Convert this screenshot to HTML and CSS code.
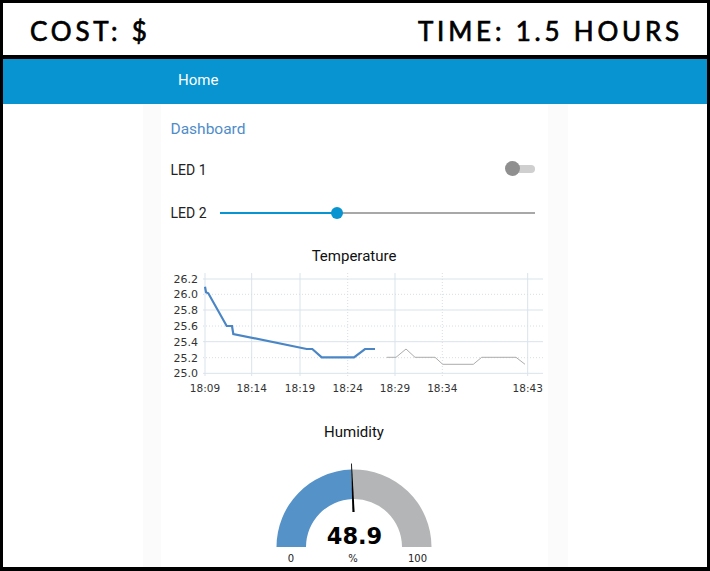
FILE: index.html
```html
<!DOCTYPE html>
<html>
<head>
<meta charset="utf-8">
<link rel="stylesheet" href="styles.css">
</head>
<body>
<div class="frame">
  <header class="banner">
    <span class="banner-text">COST: $</span>
    <span class="banner-text">TIME: 1.5 HOURS</span>
  </header>
  <nav class="toolbar"><span class="toolbar-title">Home</span></nav>
  <main class="content">
    <div class="column">
      <section class="card">
        <div class="group-title">Dashboard</div>
        <div class="row row-led1">
          <span class="row-label">LED 1</span>
          <span class="switch"><span class="switch-thumb"></span></span>
        </div>
        <div class="row row-led2">
          <span class="row-label">LED 2</span>
          <span class="slider">
            <span class="slider-fill"></span>
            <span class="slider-thumb"></span>
          </span>
        </div>
        <div class="widget-title title-temp">Temperature</div>
        <svg class="chart" width="383" height="125" viewBox="-2 0 383 125">
          <g class="grid-solid">
            <line x1="38" y1="9" x2="378" y2="9"/>
            <line x1="38" y1="40" x2="378" y2="40"/>
            <line x1="38" y1="71.7" x2="378" y2="71.7"/>
            <line x1="38" y1="103.3" x2="378" y2="103.3"/>
            <line x1="40" y1="3" x2="40" y2="106"/>
            <line x1="86.7" y1="3" x2="86.7" y2="106"/>
            <line x1="135" y1="3" x2="135" y2="106"/>
            <line x1="230" y1="3" x2="230" y2="106"/>
            <line x1="362.7" y1="3" x2="362.7" y2="106"/>
          </g>
          <g class="grid-dot">
            <line x1="38" y1="24.3" x2="378" y2="24.3"/>
            <line x1="38" y1="56" x2="378" y2="56"/>
            <line x1="38" y1="87.7" x2="378" y2="87.7"/>
            <line x1="182.7" y1="3" x2="182.7" y2="106"/>
            <line x1="277.3" y1="3" x2="277.3" y2="106"/>
          </g>
          <g class="axis-y">
            <text x="33" y="13">26.2</text>
            <text x="33" y="28.3">26.0</text>
            <text x="33" y="44">25.8</text>
            <text x="33" y="60">25.6</text>
            <text x="33" y="75.7">25.4</text>
            <text x="33" y="91.7">25.2</text>
            <text x="33" y="107.3">25.0</text>
          </g>
          <g class="axis-x">
            <text x="40" y="122">18:09</text>
            <text x="86.7" y="122">18:14</text>
            <text x="135" y="122">18:19</text>
            <text x="182.7" y="122">18:24</text>
            <text x="230" y="122">18:29</text>
            <text x="277.3" y="122">18:34</text>
            <text x="362.7" y="122">18:43</text>
          </g>
          <polyline class="line-live" points="40,16.7 41,22.3 43.3,23.3 61.7,56 67,56 68.3,64 141.7,79 147.3,79 156.7,87.3 189,87.3 200,79 210,79"/>
          <polyline class="line-old" points="221.7,87.3 231,87.3 241,79 250,87.3 270,87.3 277.7,94.3 308.3,94.3 316.7,87.3 351,87.3 360,94.3"/>
        </svg>
        <div class="widget-title title-hum">Humidity</div>
        <svg class="gauge" width="200" height="105" viewBox="0 0 200 105">
          <path class="gauge-value" d="M 22.5 87 A 77.5 77.5 0 0 1 97.32 9.55 L 98.34 39.03 A 48 48 0 0 0 52 87 Z"/>
          <path class="gauge-rest" d="M 97.32 9.55 A 77.5 77.5 0 0 1 177.5 87 L 148 87 A 48 48 0 0 0 98.34 39.03 Z"/>
          <polygon class="gauge-needle" points="97.1,3.5 97.9,3.5 100.6,52 98.4,52"/>
          <text class="gauge-number" x="100.5" y="84">48.9</text>
          <text class="gauge-label" x="37" y="102">0</text>
          <text class="gauge-label" x="99" y="102">%</text>
          <text class="gauge-label" x="163.5" y="102">100</text>
        </svg>
      </section>
    </div>
  </main>
</div>
</body>
</html>
```

FILE: styles.css
```css
html, body {
  margin: 0;
  padding: 0;
  background: #000;
}

.frame {
  width: 710px;
  height: 571px;
  box-sizing: border-box;
  padding: 3px 3px 4px 3px;
  background: #000;
  display: flex;
  flex-direction: column;
  overflow: hidden;
}

.banner {
  height: 52px;
  flex: none;
  background: #fff;
  display: flex;
  align-items: center;
  justify-content: space-between;
  padding: 0 24px 0 27px;
  box-sizing: border-box;
}

.banner-text {
  font-family: "Lato", "DejaVu Sans", sans-serif;
  font-weight: 400;
  font-size: 26px;
  letter-spacing: 3.8px;
  -webkit-text-stroke: 0.7px #000;
  color: #000;
  line-height: 1;
  padding-top: 3px;
}

.toolbar {
  margin-top: 4px;
  height: 45px;
  flex: none;
  background: #0894d0;
  display: flex;
  align-items: center;
  padding-left: 175px;
}

.toolbar-title {
  font-family: "Roboto", "Liberation Sans", sans-serif;
  font-size: 15px;
  color: #fff;
  padding-bottom: 3px;
}

.content {
  flex: 1;
  background: #fff;
  display: flex;
  justify-content: center;
  min-height: 0;
}

.column {
  width: 387px;
  padding: 0 20px 0 18px;
  background: #fbfbfb;
  display: flex;
}

.card {
  width: 387px;
  background: #fff;
  font-family: "Roboto", "Liberation Sans", sans-serif;
  color: #222;
}

.group-title {
  padding: 15px 0 0 10px;
  height: 20px;
  line-height: 20px;
  font-size: 15.5px;
  color: #4f8cc9;
}

.row {
  display: flex;
  align-items: center;
  padding: 0 13px 0 10px;
}

.row-led1 {
  margin-top: 10px;
  height: 42px;
  justify-content: space-between;
}

.row-led2 {
  height: 44px;
}

.row-label {
  font-size: 14px;
  color: #222;
  width: 49px;
  flex: none;
}

.switch {
  position: relative;
  width: 29px;
  height: 8px;
  border-radius: 4px;
  background: #cfcfcf;
  margin-top: -2px;
}

.switch-thumb {
  position: absolute;
  left: -1px;
  top: -4px;
  width: 15px;
  height: 15px;
  border-radius: 50%;
  background: #8f8f8f;
}

.slider {
  position: relative;
  flex: 1;
  height: 2px;
  background: #a8a8a8;
}

.slider-fill {
  display: block;
  width: 117px;
  height: 2px;
  background: #0894d0;
}

.slider-thumb {
  position: absolute;
  left: 111px;
  top: -5px;
  width: 12px;
  height: 12px;
  border-radius: 50%;
  background: #0894d0;
}

.widget-title {
  text-align: center;
  font-size: 15px;
  line-height: 20px;
  height: 20px;
  color: #111;
}

.title-temp {
  margin-top: 11px;
}

.chart {
  display: block;
  margin: 4px auto 0;
}

.grid-solid line {
  stroke: #d9e3ec;
  stroke-width: 1;
}

.grid-dot line {
  stroke: #d4dee8;
  stroke-width: 1;
  stroke-dasharray: 1 2;
}

.axis-y text {
  font-family: "DejaVu Sans", sans-serif;
  font-size: 11px;
  fill: #333;
  text-anchor: end;
}

.axis-x text {
  font-family: "DejaVu Sans", sans-serif;
  font-size: 10.5px;
  fill: #333;
  text-anchor: middle;
}

.line-live {
  fill: none;
  stroke: #4a86c5;
  stroke-width: 2.2;
}

.line-old {
  fill: none;
  stroke: #acacac;
  stroke-width: 1;
}

.title-hum {
  margin-top: 27px;
}

.gauge {
  display: block;
  margin: 18px auto 0;
}

.gauge-value {
  fill: #5592c8;
}

.gauge-rest {
  fill: #b4b5b6;
}

.gauge-needle {
  fill: #000;
}

.gauge-number {
  font-family: "DejaVu Sans", sans-serif;
  font-weight: 700;
  font-size: 22.5px;
  fill: #000;
  text-anchor: middle;
}

.gauge-label {
  font-family: "DejaVu Sans", sans-serif;
  font-size: 10px;
  fill: #222;
  text-anchor: middle;
}
```
